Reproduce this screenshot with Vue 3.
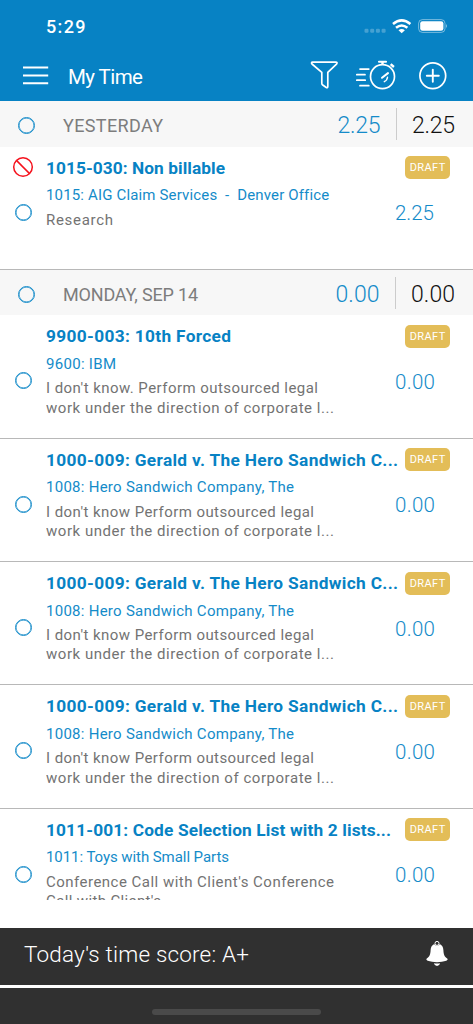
<script setup>
const herosandwich = {
  title: '1000-009: Gerald v. The Hero Sandwich C...', titleWidth: 352,
  client: '1008: Hero Sandwich Company, The', clientWidth: 248,
  lines: [
    { text: "I don't know Perform outsourced legal", width: 268 },
    { text: 'work under the direction of corporate l...', width: 288 },
  ],
  hours: '0.00', hoursWidth: 40,
}

const groups = [
  {
    label: 'YESTERDAY', labelWidth: 100, mine: '2.25', mineWidth: 43, total: '2.25', totalWidth: 43,
    entries: [
      {
        blocked: true,
        title: '1015-030: Non billable', titleWidth: 179,
        client: '1015: AIG Claim Services  -  Denver Office', clientWidth: 282,
        lines: [{ text: 'Research', width: 67 }],
        hours: '2.25', hoursWidth: 39,
      },
    ],
  },
  {
    label: 'MONDAY, SEP 14', labelWidth: 135, mine: '0.00', mineWidth: 44, total: '0.00', totalWidth: 44,
    entries: [
      {
        title: '9900-003: 10th Forced', titleWidth: 185,
        client: '9600: IBM', clientWidth: 70,
        lines: [
          { text: "I don't know. Perform outsourced legal", width: 272 },
          { text: 'work under the direction of corporate l...', width: 288 },
        ],
        hours: '0.00', hoursWidth: 40,
      },
      herosandwich,
      herosandwich,
      herosandwich,
      {
        title: '1011-001: Code Selection List with 2 lists...', titleWidth: 345,
        client: '1011: Toys with Small Parts', clientWidth: 183,
        lines: [
          { text: "Conference Call with Client's Conference", width: 288 },
          { text: "Call with Client's", width: 115 },
        ],
        hours: '0.00', hoursWidth: 40,
      },
    ],
  },
]

// Tracks a label so that its glyphs span the given number of pixels.
const vTrack = {
  mounted(el, { value }) {
    const count = el.textContent.length
    const natural = el.getBoundingClientRect().width
    const spacing = (value - natural) / (count - 1)
    el.style.letterSpacing = `${spacing}px`
    el.style.marginRight = `${-spacing}px`
  },
}
</script>

<template>
  <div class="screen">
    <header class="top">
      <div class="status">
        <span class="clock"><span v-track="39.5" class="t">5:29</span></span>
        <svg class="status-icons" width="86" height="18" viewBox="0 0 86 18">
          <g fill="#fff" opacity=".25">
            <rect x="1.5" y="10.8" width="4" height="4" rx="1.2" />
            <rect x="7.2" y="10.8" width="4" height="4" rx="1.2" />
            <rect x="12.9" y="10.8" width="4" height="4" rx="1.2" />
            <rect x="18.6" y="10.8" width="4" height="4" rx="1.2" />
          </g>
          <g fill="none" stroke="#fff" stroke-width="2.5">
            <path d="M30 6q8.7-7.2 17.4 0" />
            <path d="M33 9.8q5.7-4.7 11.4 0" />
          </g>
          <path d="M35.5 12.2q3.2-2.5 6.4 0l-3.2 3z" fill="#fff" />
          <rect x="55.6" y="1.6" width="26.4" height="12.8" rx="3.8" fill="none" stroke="#fff" opacity=".45" />
          <rect x="57.2" y="3.2" width="23.2" height="9.6" rx="2.3" fill="#fff" />
          <path d="M83 6q2 2 0 4z" fill="#fff" opacity=".5" />
        </svg>
      </div>
      <div class="bar">
        <svg class="menu" width="26" height="20" viewBox="0 0 26 20">
          <path d="M0 2.5h25.2M0 10.5h25.2M0 18.3h25.2" stroke="#fff" stroke-width="2.1" />
        </svg>
        <h1 class="title"><span v-track="75" class="t">My Time</span></h1>
        <svg class="tools" width="138" height="32" viewBox="0 0 138 32" fill="none" stroke="#fff" stroke-width="1.7" stroke-linecap="round" stroke-linejoin="round">
          <path d="M2.6 4.2H25.6Q28 4.2 26.5 6.1L17.8 14.4V28.4Q17.7 30.4 15.9 29.2L12.4 26.7Q11.8 26.3 11.8 25.2V14.4L2 6Q.8 4.3 2.6 4.2z" />
          <path d="M50 11.1h8.8M46.8 16.7h8.2M46.8 22.2h8.4M50 27.7h8.8" />
          <circle cx="72.5" cy="18.6" r="12" />
          <path d="M69 3.7h7" stroke-width="2.1" />
          <path d="M72.5 3.9v3M80.7 6.2l3.2 2.8" stroke-width="2.4" stroke-linecap="butt" />
          <path d="M72 19.8l6-4.7" stroke-width="2" />
          <path d="M77.5 19.3q-.3 3-3.2 4.4" stroke-width="1.4" />
          <circle cx="122.8" cy="17.8" r="12.9" />
          <path d="M116.8 17.8h12M122.8 11.8v12" stroke-width="1.9" />
        </svg>
      </div>
    </header>

    <main class="list">
      <section v-for="group in groups" :key="group.label">
        <div class="group-head">
          <i class="ring" />
          <span class="group-label"><span v-track="group.labelWidth" class="t">{{ group.label }}</span></span>
          <span class="sum mine"><span v-track="group.mineWidth" class="t">{{ group.mine }}</span></span>
          <span class="sum total"><span v-track="group.totalWidth" class="t">{{ group.total }}</span></span>
        </div>
        <article v-for="(entry, i) in group.entries" :key="i" class="entry">
          <div class="marks">
            <svg v-if="entry.blocked" class="blocked" width="22" height="22" viewBox="0 0 22 22" fill="none" stroke="#f5121d" stroke-width="1.5">
              <circle cx="11" cy="11" r="9.3" />
              <path d="M4.4 4.4l13.2 13.2" />
            </svg>
            <i class="ring" />
          </div>
          <div class="info">
            <h2 class="matter"><span v-track="entry.titleWidth" class="t">{{ entry.title }}</span></h2>
            <p class="client"><span v-track="entry.clientWidth" class="t">{{ entry.client }}</span></p>
            <div class="notes">
              <p v-for="line in entry.lines" :key="line.text"><span v-track="line.width" class="t">{{ line.text }}</span></p>
            </div>
          </div>
          <div class="side">
            <span class="draft"><span v-track="35.5" class="t">DRAFT</span></span>
            <span class="hours"><span v-track="entry.hoursWidth" class="t">{{ entry.hours }}</span></span>
          </div>
        </article>
      </section>
    </main>

    <footer class="score">
      <span class="score-text"><span v-track="225" class="t">Today's time score: A+</span></span>
      <svg class="bell" width="22" height="27" viewBox="0 0 22 27" fill="#fff">
        <circle cx="11" cy="3.4" r="2" fill="none" stroke="#fff" stroke-width="1" />
        <path d="M8.2 3.9C5.6 5.2 4.8 7.4 4.6 10.2C4.4 14.6 3.6 16.4.8 18.5C-.2 19.4.6 20.4 1.8 20.8C7 22.7 15 22.7 20.2 20.8C21.4 20.4 22.2 19.4 21.2 18.5C18.4 16.4 17.6 14.6 17.4 10.2C17.2 7.4 16.4 5.2 13.8 3.9C12.8 6.2 9.2 6.2 8.2 3.9z" />
        <path d="M7.9 23.2q3.1.4 6.2 0q-.6 2.7-3.1 2.7t-3.1-2.7z" />
      </svg>
    </footer>
    <div class="home"><i class="handle" /></div>
  </div>
</template>

<style>
body {
  margin: 0;
  overflow: hidden;
}
</style>

<style scoped>
.screen {
  width: 473px;
  height: 1024px;
  display: flex;
  flex-direction: column;
  overflow: hidden;
  background: #fff;
  font-family: Roboto, "Liberation Sans", sans-serif;
}
h1, h2, p {
  margin: 0;
}
.t {
  display: inline-block;
  white-space: pre;
}
.top {
  flex: none;
  height: 101px;
  box-sizing: border-box;
  background: #0782c4;
  color: #fff;
}
.status {
  display: flex;
  justify-content: space-between;
  height: 52px;
  padding: 0 24px 0 46px;
}
.clock {
  margin-top: 16px;
  font-size: 18px;
  line-height: 21px;
  font-weight: 500;
}
.status-icons {
  margin-top: 18px;
}
.bar {
  display: flex;
  align-items: center;
  height: 48px;
  padding: 0 25px 0 23px;
}
.menu {
  margin-top: -2px;
}
.title {
  flex: 1;
  margin: 1px 0 0 19px;
  font-size: 20.5px;
  line-height: 26px;
  font-weight: 400;
}
.tools {
  margin-top: -3.5px;
}
.list {
  height: 798.5px;
  margin-bottom: 28px;
  flex: none;
  overflow: hidden;
}
.group-head {
  display: flex;
  align-items: center;
  height: 45.5px;
  padding: 0 18px 0 18px;
  background: #f7f7f7;
}
.ring {
  flex: none;
  width: 17px;
  height: 17px;
  box-sizing: border-box;
  border: 1.5px solid #148bc9;
  border-radius: 50%;
  box-shadow: inset 0 0 0 .5px #148bc9;
}
.group-head .ring {
  margin-top: 3px;
}
.group-label {
  flex: 1;
  margin-left: 28px;
  padding-top: 3px;
  color: #7d7d7d;
  font-size: 18px;
}
.sum {
  padding-top: 4px;
  color: #111;
  font-size: 23px;
  font-weight: 300;
  line-height: 28px;
}
.mine {
  margin-right: 15.5px;
  color: #148bc9;
}
.total {
  padding-left: 15px;
  border-left: 1px solid #ccc;
}
.entry {
  display: flex;
  height: 123.35px;
  box-sizing: border-box;
  border-bottom: 1px solid #b8b8b8;
}
.marks {
  display: flex;
  flex-direction: column;
  justify-content: flex-end;
  align-items: center;
  width: 46px;
  height: 74px;
}
.blocked {
  margin-bottom: 26px;
}
.info {
  width: 359px;
  padding-top: 10px;
}
.matter {
  height: 22px;
  color: #0782c4;
  font-size: 17.3px;
  line-height: 22px;
  font-weight: 700;
}
.client {
  margin-top: 6.5px;
  color: #148bc9;
  font-size: 15px;
  line-height: 20px;
}
.notes {
  height: 39px;
  margin-top: 5.5px;
  overflow: hidden;
  color: #737373;
  font-size: 15px;
  line-height: 19.3px;
}
.side {
  display: flex;
  flex-direction: column;
  align-items: flex-start;
  width: 68px;
}
.draft {
  display: flex;
  justify-content: center;
  width: 45px;
  height: 23px;
  margin-top: 9.5px;
  border-radius: 5px;
  background: #e3bd58;
  color: #fff;
  font-size: 11px;
  line-height: 24px;
}
.hours {
  margin: 22px 0 0 -10px;
  color: #148bc9;
  font-size: 20.5px;
  line-height: 25px;
  font-weight: 300;
}
.score {
  flex: none;
  display: flex;
  justify-content: space-between;
  align-items: center;
  height: 57px;
  padding: 0 25px 0 24px;
  box-sizing: border-box;
  background: #303030;
  color: #fff;
}
.score-text {
  margin-top: -4px;
  font-size: 22.5px;
  font-weight: 300;
}
.bell {
  margin-top: -6px;
}
.home {
  flex: 1;
  display: flex;
  justify-content: center;
  align-items: flex-end;
  border-top: 3px solid #fff;
  background: #303030;
}
.handle {
  width: 169px;
  height: 5.5px;
  margin-bottom: 9.5px;
  border-radius: 3px;
  background: #4a4a4a;
}
</style>
